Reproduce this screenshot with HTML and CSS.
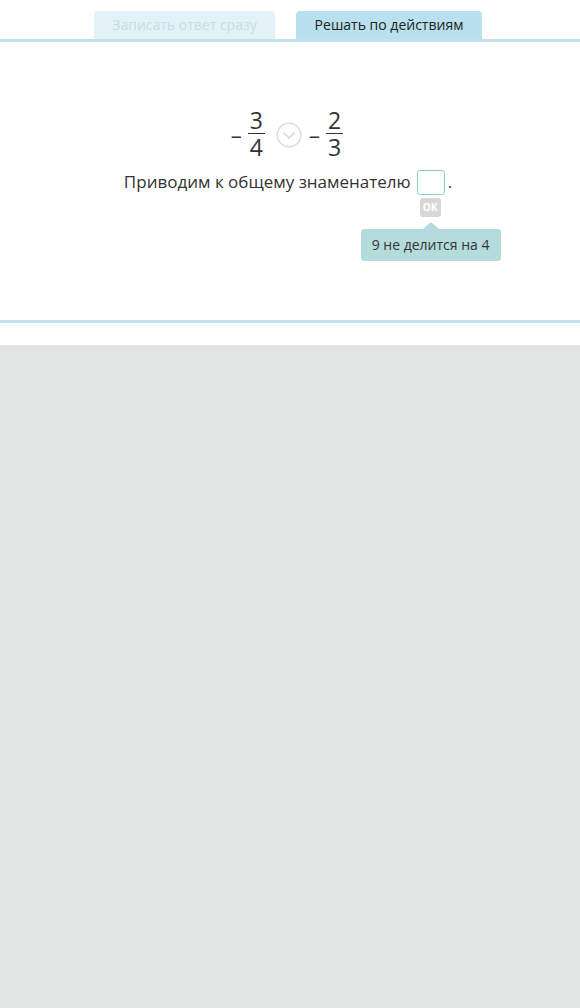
FILE: index.html
```html
<!DOCTYPE html>
<html lang="ru">
<head>
<meta charset="utf-8">
<link rel="stylesheet" href="styles.css">
</head>
<body>
<div class="sheet">
  <div class="tabs">
    <div class="tab tab-off">Записать ответ сразу</div>
    <div class="tab tab-on">Решать по действиям</div>
  </div>
  <div class="panel">
    <div class="expr">
      <span class="minus">–</span>
      <span class="frac"><span class="num">3</span><span class="den">4</span></span>
      <span class="op-toggle">
        <svg width="26" height="26" viewBox="0 0 26 26"><circle cx="13" cy="13" r="11.8" fill="none" stroke="#dcdcdc" stroke-width="1.5"/><path d="M7.5 10.5 L13 16 L18.5 10.5" fill="none" stroke="#d6d6d6" stroke-width="1.5"/></svg>
      </span>
      <span class="minus">–</span>
      <span class="frac"><span class="num">2</span><span class="den">3</span></span>
    </div>
    <div class="step">
      <span>Приводим к общему знаменателю</span>
      <span class="answer">
        <span class="box"></span>
        <span class="ok">OK</span>
        <span class="hint">9 не делится на 4</span>
      </span>
      <span>.</span>
    </div>
  </div>
  <div class="foot"></div>
</div>
</body>
</html>
```
FILE: styles.css
```css
html, body {
  margin: 0;
  padding: 0;
}
body {
  background: #e3e4e4;
  font-family: "Open Sans", "Noto Sans", sans-serif;
  color: #333;
}
.sheet {
  background: #fff;
  box-shadow: 0 1px 4px rgba(0, 0, 0, 0.55);
}
.tabs {
  display: flex;
  gap: 21px;
  padding: 11px 0 0 94px;
  height: 28px;
}
.tab {
  height: 28px;
  line-height: 28px;
  font-size: 14px;
  text-align: center;
  border-radius: 4px 4px 0 0;
}
.tab-off {
  width: 181px;
  background: #e3f2f8;
  color: #c6dde6;
}
.tab-on {
  width: 186px;
  background: #b9e0ee;
  color: #222;
}
.panel {
  border-top: 3px solid #c1e2ea;
  border-bottom: 3px solid #c1e2ea;
  box-sizing: border-box;
  height: 284px;
}
.expr {
  display: flex;
  justify-content: center;
  align-items: center;
  padding-top: 65px;
  padding-right: 6px;
  height: 54px;
  font-size: 23px;
  color: #333;
}
.minus {
  margin-right: 6px;
  font-size: 22px;
  line-height: 24px;
}
.frac {
  display: flex;
  flex-direction: column;
  align-items: center;
}
.num {
  border-bottom: 1.5px solid #333;
  padding: 0 2px;
  line-height: 25px;
}
.den {
  line-height: 26px;
}
.op-toggle {
  display: flex;
  margin: 0 7px 0 11px;
  padding-top: 2px;
}
.step {
  display: flex;
  justify-content: center;
  align-items: center;
  margin-top: 8px;
  padding-right: 4px;
  font-size: 17px;
  line-height: 26px;
}
.answer {
  position: relative;
  margin: 0 3px 0 6px;
  display: flex;
}
.box {
  width: 26px;
  height: 23px;
  border: 1.5px solid #8ccfd9;
  border-radius: 3px;
  background: #fff;
}
.ok {
  position: absolute;
  top: 28px;
  left: 3px;
  width: 21px;
  height: 19px;
  line-height: 19px;
  border-radius: 3px;
  background: #d8d8d8;
  color: #fff;
  font-size: 10px;
  font-weight: 700;
  text-align: center;
}
.hint {
  position: absolute;
  top: 59px;
  left: -56px;
  white-space: nowrap;
  padding: 0 12px 0 11px;
  height: 32px;
  line-height: 32px;
  border-radius: 3px;
  background: #b4dcdc;
  color: #333;
  font-size: 14px;
}
.hint::before {
  content: "";
  position: absolute;
  top: -7px;
  left: 62px;
  border-left: 8px solid transparent;
  border-right: 8px solid transparent;
  border-bottom: 7px solid #b4dcdc;
}
.foot {
  height: 22px;
  background: linear-gradient(#fdfffb, #fff);
}
```
